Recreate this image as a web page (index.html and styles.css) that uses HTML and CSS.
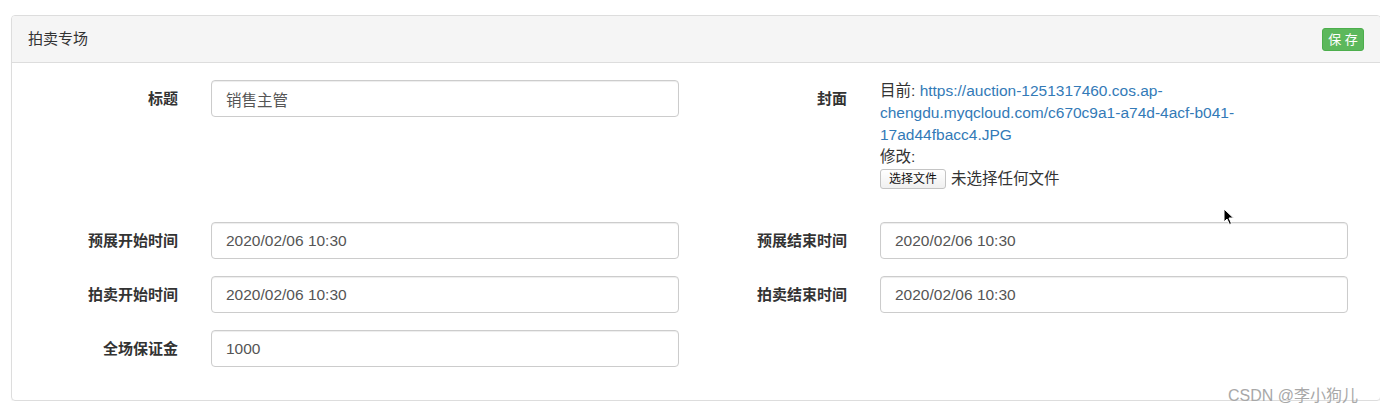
FILE: index.html
```html
<!DOCTYPE html>
<html lang="zh-CN">

<head>
    <meta charset="UTF-8">
    <title>拍卖专场</title>
    <link rel="stylesheet" href="styles.css">
</head>

<body>
    <div class="panel">
        <div class="panel-heading">
            <span class="panel-title">拍卖专场</span>
            <button class="btn-save">保 存</button>
        </div>
        <div class="panel-body">
            <div class="form-row row-first">
                <label class="form-label">标题</label>
                <input class="form-input" type="text" value="销售主管">
                <label class="form-label">封面</label>
                <div class="cover">
                    <div>目前: <a href="#">https://auction-1251317460.cos.ap-<br>chengdu.myqcloud.com/c670c9a1-a74d-4acf-b041-<br>17ad44fbacc4.JPG</a></div>
                    <div>修改:</div>
                    <div class="file-line">
                        <span class="file-btn">选择文件</span>
                        <span>未选择任何文件</span>
                    </div>
                </div>
            </div>
            <div class="form-row">
                <label class="form-label">预展开始时间</label>
                <input class="form-input" type="text" value="2020/02/06 10:30">
                <label class="form-label">预展结束时间</label>
                <input class="form-input" type="text" value="2020/02/06 10:30">
            </div>
            <div class="form-row">
                <label class="form-label">拍卖开始时间</label>
                <input class="form-input" type="text" value="2020/02/06 10:30">
                <label class="form-label">拍卖结束时间</label>
                <input class="form-input" type="text" value="2020/02/06 10:30">
            </div>
            <div class="form-row">
                <label class="form-label">全场保证金</label>
                <input class="form-input" type="text" value="1000">
            </div>
        </div>
    </div>

    <svg class="cursor" width="12" height="18" viewBox="0 0 12 18">
        <path d="M1 1 L1 14 L4 11 L6.5 16.5 L8.5 15.5 L6 10 L10.5 10 Z" fill="#000" stroke="#fff" stroke-width="1"/>
    </svg>

    <div class="watermark">CSDN @李小狗儿</div>
</body>

</html>
```

FILE: styles.css
```css
body {
    margin: 0;
    padding: 0;
    overflow: hidden;
    background-color: #ffffff;
    font-family: "Liberation Sans", "Noto Sans CJK SC", sans-serif;
    font-size: 15.5px;
    line-height: 22px;
    color: #333333;
}

.panel {
    margin: 15px 0 0 11px;
    width: 1368px;
    border: 1px solid #dddddd;
    border-radius: 4px;
    box-shadow: 0 1px 1px rgba(0, 0, 0, 0.05);
}

.panel-heading {
    display: flex;
    justify-content: space-between;
    align-items: center;
    padding: 11px 16px;
    height: 24px;
    background-color: #f5f5f5;
    border-bottom: 1px solid #dddddd;
    border-radius: 3px 3px 0 0;
}

.panel-title {
    font-size: 15px;
}

.btn-save {
    background-color: #5cb85c;
    border: 1px solid #4cae4c;
    border-radius: 3px;
    color: #ffffff;
    font-family: inherit;
    font-size: 13px;
    line-height: 19px;
    padding: 1px 5px;
    width: 42px;
    height: 23px;
    cursor: pointer;
}

.panel-body {
    padding: 17px 0 16px 0;
}

.form-row {
    display: grid;
    grid-template-columns: 166px 468px 135px 468px;
    column-gap: 33px;
    align-items: start;
    margin-bottom: 17px;
}

.row-first {
    min-height: 125px;
}

.form-label {
    text-align: right;
    font-weight: bold;
    font-size: 15px;
    padding-top: 8px;
    line-height: 21px;
}

.form-input {
    box-sizing: border-box;
    height: 37px;
    padding: 6px 14px;
    border: 1px solid #cccccc;
    border-radius: 4px;
    box-shadow: inset 0 1px 1px rgba(0, 0, 0, 0.075);
    font-family: inherit;
    font-size: 15.5px;
    color: #555555;
}

.cover a {
    color: #337ab7;
    text-decoration: none;
}

.file-line {
    display: flex;
    align-items: center;
    gap: 5px;
}

.file-btn {
    display: inline-block;
    font-size: 12px;
    line-height: 16px;
    padding: 1px 8px;
    border: 1px solid #c4c4c4;
    border-radius: 3px;
    background: linear-gradient(#ffffff, #f0f0f0);
    color: #111111;
}

.cursor {
    position: absolute;
    left: 1223px;
    top: 208px;
}

.watermark {
    position: absolute;
    left: 1228px;
    top: 385px;
    font-size: 16px;
    color: #a8a8a8;
}
```
